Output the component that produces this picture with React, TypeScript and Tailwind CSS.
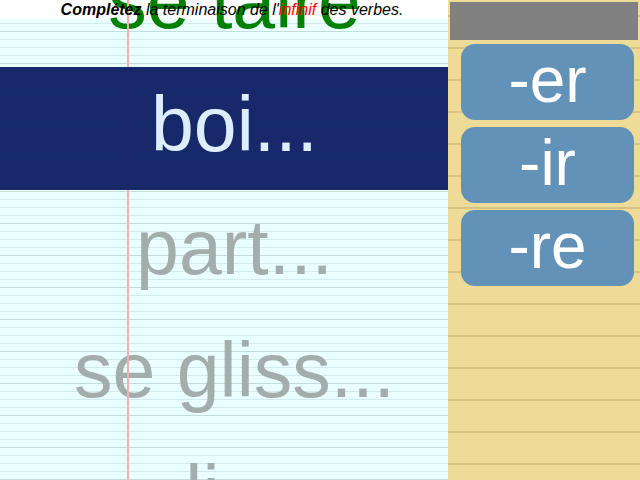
import React from 'react';

const words = [
  { text: 'se taire', state: 'done' },
  { text: 'boi...', state: 'current' },
  { text: 'part...', state: 'next' },
  { text: 'se gliss...', state: 'next' },
  { text: 'li...', state: 'next' },
];

const endings = ['-er', '-ir', '-re'];

const App: React.FC = () => {
  return (
    <div className="flex w-[640px] h-[480px] overflow-hidden font-['Liberation_Sans',Arial,sans-serif]">
      {/* Cahier ligné */}
      <div className="relative w-[448px] h-full overflow-hidden bg-[#eaffff] bg-[repeating-linear-gradient(to_bottom,transparent_0px,transparent_7px,#d2ecec_7px,#d2ecec_8px,transparent_8px,transparent_15px,#d2ecec_15px,#d2ecec_16px,transparent_16px,transparent_23px,#d2ecec_23px,#d2ecec_24px,transparent_24px,transparent_31px,#c4dcdc_31px,#c4dcdc_32px)]">
        <div className="absolute top-0 left-0 right-0 h-[19px] bg-white" />
        <div className="absolute z-[1] top-0 bottom-0 left-[127px] w-[2px] bg-[#f2b0b0]" />

        <div className="relative flex flex-col -mt-[56px] pl-[21px]">
          {words.map((w, i) => (
            <div
              key={i}
              className={
                w.state === 'current'
                  ? 'relative z-[2] h-[123px] -ml-[21px] pl-[21px] flex items-center justify-center bg-[#0c1d62]/95 text-[#ddeeff] text-[77px] leading-none pb-2'
                  : w.state === 'done'
                  ? 'h-[123px] flex items-center justify-center text-[#008000] text-[77px] leading-none pb-2'
                  : 'h-[123px] flex items-center justify-center text-[#a3adab] text-[77px] leading-none pb-2'
              }
            >
              {w.text}
            </div>
          ))}
        </div>

        <div className="absolute z-[3] top-0 left-0 right-0 pl-4 text-center text-[16px] leading-[19px] italic text-black">
          <span className="font-bold">Complétez</span> la terminaison de l'<span className="text-[#ff0000]">infinif</span> des verbes.
        </div>
      </div>

      {/* Terminaisons */}
      <div className="w-[192px] h-full bg-[#eddb97] bg-[repeating-linear-gradient(to_bottom,transparent_0px,transparent_15px,#d6c487_15px,#d6c487_17px,transparent_17px,transparent_32px)] flex flex-col pt-[2px]">
        <div className="mx-[2px] h-[38px] bg-[#808080]" />
        <div className="flex flex-col gap-[7px] pl-[13px] pr-[6px] pt-1">
          {endings.map((e) => (
            <button
              key={e}
              className="h-[76px] rounded-[14px] bg-[#6292b7] text-white text-[64px] leading-none flex items-center justify-center pb-1"
            >
              {e}
            </button>
          ))}
        </div>
      </div>
    </div>
  );
};

export default App;
